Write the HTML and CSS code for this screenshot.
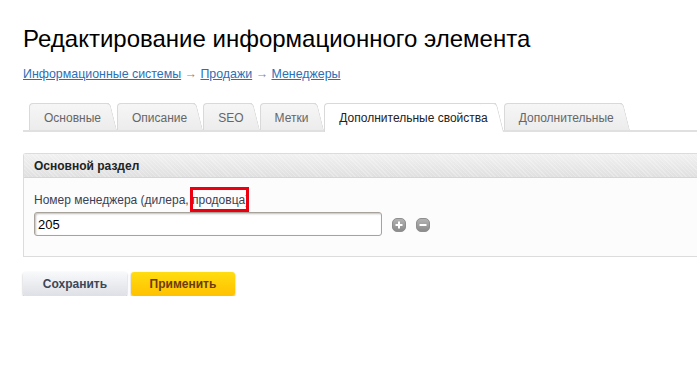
FILE: index.html
```html
<!DOCTYPE html>
<html lang="ru">
<head>
  <meta charset="UTF-8">
  <title>Редактирование информационного элемента</title>
  <link rel="stylesheet" href="styles.css">
</head>
<body>
<div class="page">
  <h1>Редактирование информационного элемента</h1>

  <div class="crumbs">
    <a href="#">Информационные системы</a> <span class="arr">→</span> <a href="#">Продажи</a> <span class="arr">→</span> <a href="#">Менеджеры</a>
  </div>

  <div class="tabs">
    <a class="tab" href="#">Основные</a>
    <a class="tab" href="#">Описание</a>
    <a class="tab" href="#">SEO</a>
    <a class="tab" href="#">Метки</a>
    <a class="tab active" href="#">Дополнительные свойства</a>
    <a class="tab" href="#">Дополнительные</a>
  </div>

  <div class="panel">
    <div class="panel-head">Основной раздел</div>
    <div class="panel-body">
      <div class="label">Номер менеджера (дилера, <span class="mark">продовца</span>)</div>
      <div class="field-row">
        <input class="field" type="text" value="205">
        <span class="ico">
          <svg width="14" height="14" viewBox="0 0 14 14">
            <defs>
              <linearGradient id="g1" x1="0" y1="0" x2="0" y2="1">
                <stop offset="0" stop-color="#b4b4b4"/>
                <stop offset="1" stop-color="#8a8a8a"/>
              </linearGradient>
            </defs>
            <rect x="0.5" y="0.5" width="13" height="13" rx="4.5" fill="url(#g1)" stroke="#8f8f8f"/>
            <path d="M7 3.5v7M3.5 7h7" stroke="#fff" stroke-width="2"/>
          </svg>
        </span>
        <span class="ico">
          <svg width="14" height="14" viewBox="0 0 14 14">
            <rect x="0.5" y="0.5" width="13" height="13" rx="4.5" fill="url(#g1)" stroke="#8f8f8f"/>
            <path d="M3.5 7h7" stroke="#fff" stroke-width="2"/>
          </svg>
        </span>
      </div>
    </div>
  </div>

  <div class="buttons">
    <button class="btn btn-save">Сохранить</button>
    <button class="btn btn-apply">Применить</button>
  </div>
</div>
</body>
</html>
```

FILE: styles.css
```css
body {
  margin: 0;
  background: #fff;
  font-family: Arial, "Liberation Sans", sans-serif;
  color: #333;
  overflow: hidden;
}
.page {
  padding: 25px 0 0 23px;
}
h1 {
  margin: 0;
  font-size: 24px;
  line-height: 28px;
  font-weight: normal;
  color: #000;
}

.crumbs {
  margin-top: 14px;
  font-size: 12.4px;
  line-height: 15px;
  color: #888;
}
.crumbs a {
  color: #2c6fb5;
}

/* Вкладки */
.tabs {
  margin-top: 21px;
  display: flex;
  padding-left: 6px;
  border-bottom: 2px solid #e0e0e0;
  height: 27px;
}
.tab {
  position: relative;
  z-index: 1;
  display: block;
  height: 27px;
  line-height: 28px;
  padding: 0 8px 0 14px;
  margin-right: 8px;
  font-size: 12px;
  color: #666;
  text-decoration: none;
  background: linear-gradient(#f6f6f6, #ececec);
  border: 1px solid #d9d9d9;
  border-right: none;
  border-bottom: none;
  border-top-left-radius: 4px;
  box-sizing: border-box;
}
.tab::after {
  content: "";
  position: absolute;
  z-index: -1;
  top: -1px;
  bottom: 0;
  right: -8px;
  width: 16px;
  background: linear-gradient(#f6f6f6, #ececec);
  border-top: 1px solid #d9d9d9;
  border-right: 1px solid #d9d9d9;
  border-top-right-radius: 4px;
  transform: skewX(14deg);
  transform-origin: bottom left;
}
.tab.active {
  color: #222;
  background: #fff;
  height: 29px;
  margin-bottom: -2px;
  z-index: 2;
}
.tab.active::after {
  background: #fff;
}

/* Панель */
.panel {
  margin-top: 21px;
  border: 1px solid #dcdcdc;
  border-right: none;
  border-top-left-radius: 3px;
}
.panel-head {
  height: 23px;
  line-height: 24px;
  padding-left: 10px;
  font-size: 12px;
  font-weight: bold;
  color: #222;
  background:
    repeating-linear-gradient(45deg, rgba(255,255,255,0.25) 0 1px, transparent 1px 3px),
    linear-gradient(#f1f1f1, #e0e0e0);
  border-bottom: 1px solid #d6d6d6;
}
.panel-body {
  background: #fcfcfc;
  padding: 15px 0 17px 10px;
  height: 46px;
}
.label {
  font-size: 12px;
  line-height: 14px;
  color: #3b3f54;
}
.mark {
  position: relative;
}
.mark::after {
  content: "";
  position: absolute;
  left: -2px;
  right: -4px;
  top: -6px;
  bottom: -5px;
  border: 3px solid #ec0010;
}
.field-row {
  margin-top: 5px;
  display: flex;
  align-items: center;
  gap: 10px;
}
.field {
  width: 348px;
  height: 24px;
  box-sizing: border-box;
  border: 1px solid #a8a39a;
  border-radius: 3px;
  box-shadow: inset 1px 1px 2px rgba(0,0,0,0.25);
  padding: 0 3px;
  font-family: Arial, "Liberation Sans", sans-serif;
  font-size: 13px;
  color: #000;
  background: #fff;
}
.ico {
  display: flex;
  margin-top: 1px;
}

/* Кнопки */
.buttons {
  margin-top: 15px;
  display: flex;
  gap: 4px;
}
.btn {
  width: 104px;
  height: 24px;
  border: none;
  border-radius: 3px;
  font-family: Arial, "Liberation Sans", sans-serif;
  font-size: 12px;
  font-weight: bold;
  box-shadow: 0 1px 2px rgba(0,0,0,0.35);
  cursor: pointer;
}
.btn-save {
  color: #3c4656;
  background: linear-gradient(#f8f9fb, #dde0e5);
}
.btn-apply {
  color: #6b3d0a;
  background: linear-gradient(#ffdd10, #ffc100);
}
```
